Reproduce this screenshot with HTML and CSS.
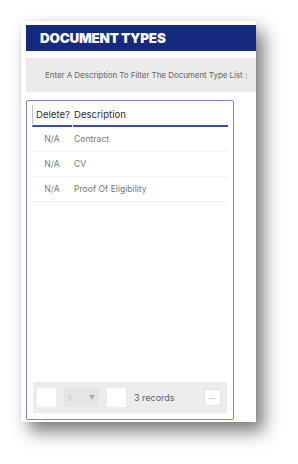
FILE: index.html
```html
<!DOCTYPE html>
<html>
<head>
<meta charset="utf-8">
<link rel="stylesheet" href="styles.css">
</head>
<body>
<div class="card">
  <div class="title">DOCUMENT TYPES</div>
  <div class="filter">Enter A Description To Filter The Document Type List :</div>
  <div class="gridbox">
    <div class="grid">
      <div class="hrow">
        <div class="hcell c1">Delete?</div>
        <div class="hcell c2">Description</div>
      </div>
      <div class="row"><div class="cell c1">N/A</div><div class="cell c2">Contract</div></div>
      <div class="row"><div class="cell c1">N/A</div><div class="cell c2">CV</div></div>
      <div class="row"><div class="cell c1">N/A</div><div class="cell c2">Proof Of Eligibility</div></div>
    </div>
    <div class="pager">
      <div class="sq"></div>
      <div class="sel"><span>1</span><span class="arr">&#9660;</span></div>
      <div class="sq"></div>
      <div class="rec">3 records</div>
      <div class="more">...</div>
    </div>
  </div>
</div>
</body>
</html>
```
FILE: styles.css
```css
html, body { margin: 0; padding: 0; background: #fff; }
body { width: 298px; height: 464px; overflow: hidden; font-family: Inter, "Liberation Sans", sans-serif; }
.card {
  margin: 21px 0 0 21px;
  width: 235px;
  height: 401px;
  background: #fff;
  box-sizing: border-box;
  padding: 4px 0 0 5px;
  box-shadow: 8px 10px 16px rgba(0,0,0,0.5), 0 0 4px rgba(0,0,0,0.08);
  display: flex;
  flex-direction: column;
}
.title {
  height: 26px;
  background: #15297f;
  color: #fff;
  font-weight: 900;
  font-size: 13.4px;
  line-height: 26px;
  padding-left: 14px;
  letter-spacing: -0.2px;
}
.filter {
  margin-top: 7px;
  height: 34px;
  background: #ebebeb;
  color: #666;
  font-size: 8px;
  letter-spacing: -0.05px;
  line-height: 34px;
  padding-left: 19px;
  white-space: nowrap;
  overflow: hidden;
}
.gridbox {
  margin-top: 8px;
  width: 208px;
  height: 320px;
  box-sizing: border-box;
  border: 1px solid #7d86c2;
  border-radius: 2px;
  padding: 4px 5px 6px 5px;
  display: flex;
  flex-direction: column;
}
.grid { flex: 1; }
.hrow { display: flex; height: 22px; }
.hcell {
  color: #2e2e2e;
  font-size: 9.6px;
  line-height: 20px;
  border-bottom: 2px solid #3e4d9b;
  box-sizing: border-box;
  height: 22px;
}
.hrow .c1 { border-left: 1px solid #b9bfe0; text-align: left; padding-left: 3px; }
.c1 { width: 40px; flex: none; box-sizing: border-box; }
.c2 { flex: 1; margin-left: 1px; padding-left: 1px; }
.row { display: flex; height: 25px; border-bottom: 1px solid #f0f0f0; box-sizing: border-box; }
.cell { font-size: 8.6px; color: #777; line-height: 25px; }
.row .c1 { text-align: center; }
.pager {
  height: 31px;
  background: #ececec;
  border-radius: 2px;
  margin: 0 1px;
  display: flex;
  align-items: center;
  padding: 0 6px 0 4px;
}
.sq { width: 19px; height: 19px; background: #fff; }
.sel {
  margin: 0 8px;
  width: 35px;
  height: 19px;
  background: #e5e5e5;
  display: flex;
  align-items: center;
  justify-content: space-between;
  padding: 0 4px;
  box-sizing: border-box;
  font-size: 8px;
  color: #c4c4c4;
}
.sel .arr { font-size: 6px; color: #aaa; }
.rec { margin-left: 8px; font-size: 9px; color: #5b5c78; flex: 1; }
.more {
  width: 17px;
  height: 17px;
  background: #fff;
  border: 1px solid #e2e2e2;
  border-radius: 2px;
  box-sizing: border-box;
  font-size: 7px;
  color: #888;
  text-align: center;
  line-height: 14px;
}
```
